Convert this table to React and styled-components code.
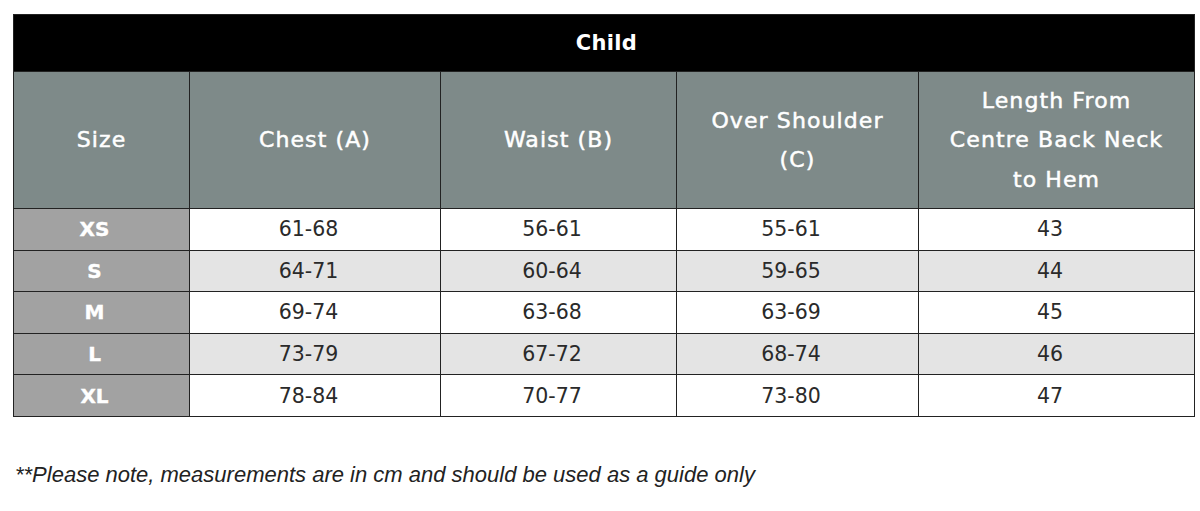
import React from "react";
import styled, { createGlobalStyle } from "styled-components";

const Global = createGlobalStyle`
  html, body { margin: 0; padding: 0; background: #fff; }
  body { font-family: "DejaVu Sans", "Noto Sans", sans-serif; }
`;

const Page = styled.div`
  padding: 14px 6px 0 13px;
`;

const Table = styled.table`
  width: 1181px;
  border-collapse: collapse;
  table-layout: fixed;
  border: 1.5px solid #222;
`;

const Row = styled.tr`
  height: ${(p) => p.$h}px;
`;

const TitleCell = styled.th`
  background: #000;
  color: #fff;
  padding: 0 0 0 5px;
  font-size: 21px;
  font-weight: 700;
  letter-spacing: 0.3px;
  text-align: center;
  border: 1.5px solid #222;
`;

const HeadCell = styled.th`
  background: #7e8a89;
  color: #fff;
  padding: 0 8px;
  font-size: 22px;
  font-weight: 400;
  line-height: 39.5px;
  letter-spacing: 1.1px;
  text-align: center;
  border: 1.5px solid #222;
  -webkit-text-stroke: 0.5px #fff;
`;

const SizeCell = styled.td`
  background: #a2a2a2;
  color: #fff;
  padding: 0 14px 0 0;
  font-size: 20px;
  font-weight: 700;
  text-align: center;
  border: 1.5px solid #222;
  -webkit-text-stroke: 0.4px #fff;
`;

const ValueCell = styled.td`
  background: ${(p) => (p.$alt ? "#e4e4e4" : "#fff")};
  color: #2a2a2a;
  padding: 0 13px 0 0;
  font-size: 20.5px;
  font-weight: 400;
  text-align: center;
  border: 1.5px solid #222;
`;

const Note = styled.p`
  margin: 45px 0 0 2px;
  font-family: "Liberation Sans", Arial, sans-serif;
  font-style: italic;
  font-size: 22px;
  line-height: 26px;
  color: #222;
`;

const widths = [176, 251, 236, 242, 276];
const headers = [
  ["Size"],
  ["Chest (A)"],
  ["Waist (B)"],
  ["Over Shoulder", "(C)"],
  ["Length From", "Centre Back Neck", "to Hem"],
];
const rows = [
  ["XS", "61-68", "56-61", "55-61", "43"],
  ["S", "64-71", "60-64", "59-65", "44"],
  ["M", "69-74", "63-68", "63-69", "45"],
  ["L", "73-79", "67-72", "68-74", "46"],
  ["XL", "78-84", "70-77", "73-80", "47"],
];

export default function App() {
  return (
    <Page>
      <Global />
      <Table>
        <colgroup>
          {widths.map((w, i) => (
            <col key={i} style={{ width: w }} />
          ))}
        </colgroup>
        <thead>
          <Row $h={57}>
            <TitleCell colSpan={5}>Child</TitleCell>
          </Row>
          <Row $h={137}>
            {headers.map((lines) => (
              <HeadCell key={lines.join(" ")}>
                {lines.map((l, k) => (
                  <React.Fragment key={k}>
                    {k > 0 && <br />}
                    {l}
                  </React.Fragment>
                ))}
              </HeadCell>
            ))}
          </Row>
        </thead>
        <tbody>
          {rows.map((r, i) => (
            <Row $h={41.6} key={r[0]}>
              <SizeCell>{r[0]}</SizeCell>
              {r.slice(1).map((v, j) => (
                <ValueCell key={j} $alt={i % 2 === 1}>
                  {v}
                </ValueCell>
              ))}
            </Row>
          ))}
        </tbody>
      </Table>
      <Note>**Please note, measurements are in cm and should be used as a guide only</Note>
    </Page>
  );
}
